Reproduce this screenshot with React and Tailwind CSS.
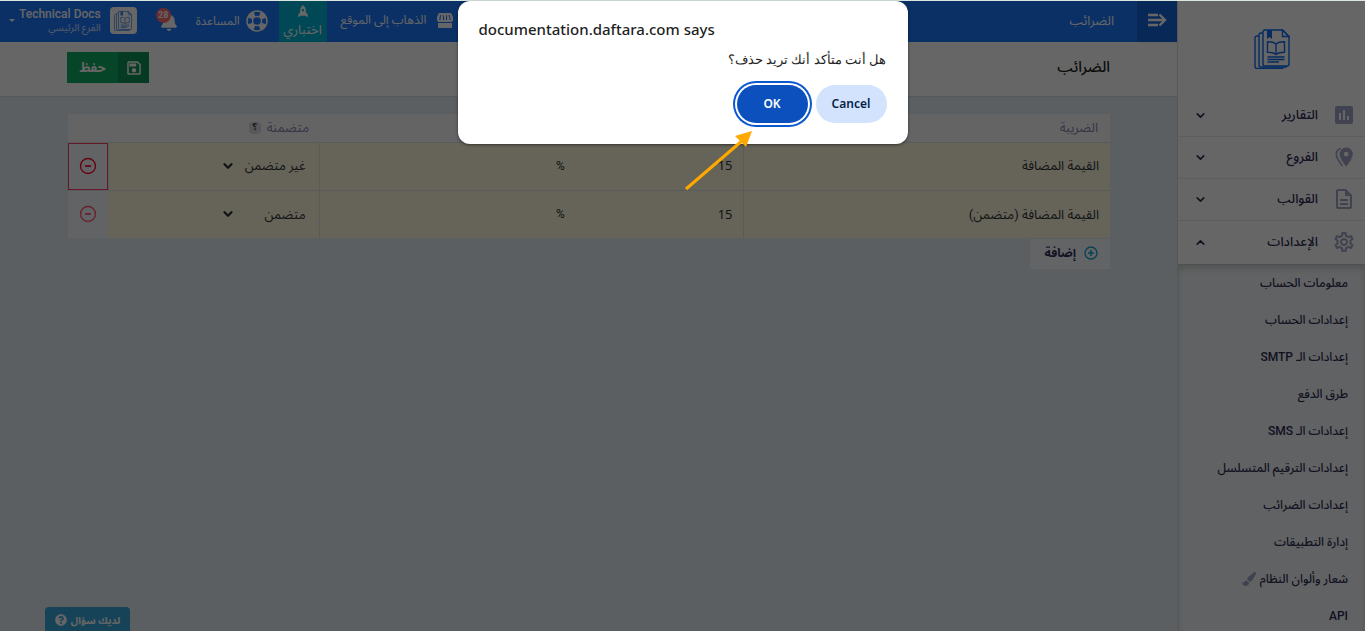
import { FaBell, FaQuestionCircle, FaPaintBrush } from 'react-icons/fa'
import {
  MdInsertChart,
  MdOutlineDescription,
  MdOutlineSave,
  MdOutlineSettings,
} from 'react-icons/md'
import { ChevronDown, ChevronUp } from 'lucide-react'

function BranchesIcon() {
  return (
    <svg width="24" height="24" viewBox="-2 -2 24 24" fill="currentColor" aria-hidden="true">
      <path
        fillRule="evenodd"
        d="M12.2 0.6a6.6 6.6 0 0 1 6.6 6.6c0 4.6-6.6 12.3-6.6 12.3S5.6 11.8 5.6 7.2A6.6 6.6 0 0 1 12.2 0.6zm0 4.2a2.4 2.4 0 1 0 0 4.8 2.4 2.4 0 0 0 0-4.8z"
      />
      <path
        d="M6.6 1.4C4 2.4 2.3 4.5 2.3 7.3c0 4.3 4.7 9.8 6.3 11.7"
        fill="none"
        stroke="currentColor"
        strokeWidth="1.6"
      />
    </svg>
  )
}

function MenuIcon() {
  return (
    <svg
      width="20"
      height="14"
      viewBox="0 0 20 14"
      fill="none"
      stroke="currentColor"
      strokeWidth="2.4"
      aria-hidden="true"
    >
      <path d="M1 2h10M1 7h17M1 12h10M12.5 1.5 18 7l-5.5 5.5" />
    </svg>
  )
}

function StoreIcon() {
  return (
    <svg width="16" height="15" viewBox="0 0 16 15" fill="currentColor" aria-hidden="true">
      <path
        fillRule="evenodd"
        d="M2 0h12l2 4v3a2 2 0 0 1-2 2H2a2 2 0 0 1-2-2V4zM3.5 2 2.5 4.5V7h1V4.5L4.5 2zm3 0-.5 2.5V7h1V2zM9 2v5h1V4.5L9.500 2zm2.500 0 1 2.500V7h1V4.500L12.500 2z"
      />
      <path d="M1 10h14v4a1 1 0 0 1-1 1H2a1 1 0 0 1-1-1z" />
    </svg>
  )
}

function RocketIcon() {
  return (
    <svg width="12" height="15" viewBox="0 0 12 15" fill="currentColor" aria-hidden="true">
      <path
        fillRule="evenodd"
        d="M6 0c2.200 1.600 3.300 3.800 3.300 6.300v2L11.500 11v3L8.500 12.500h-5L.5 14v-3l2.200-2.700v-2C2.700 3.800 3.800 1.600 6 0zm0 4.500a1.400 1.400 0 1 0 0 2.800 1.400 1.400 0 0 0 0-2.800z"
      />
    </svg>
  )
}

function LifebuoyIcon() {
  return (
    <svg width="22" height="22" viewBox="0 0 22 22" fill="none" stroke="currentColor" aria-hidden="true">
      <circle cx="11" cy="11" r="10" strokeWidth="1.5" />
      <circle cx="11" cy="11" r="4.5" strokeWidth="1.5" />
      <circle
        cx="11"
        cy="11"
        r="7.5"
        strokeWidth="5"
        strokeDasharray="6.28 5.5"
        strokeDashoffset="-2.7"
      />
    </svg>
  )
}

function DocsLogo({ className }) {
  return (
    <svg
      viewBox="0 0 36 40"
      className={className}
      fill="none"
      stroke="currentColor"
      strokeWidth="1.4"
      aria-hidden="true"
    >
      <path d="M10 1h18.500L35 7.500V35a2 2 0 0 1-2 2H11a2 2 0 0 1-2-2V3a2 2 0 0 1 2-2z" />
      <path d="M28.500 1v6.500H35z" />
      <path d="M9 4H7a2 2 0 0 0-2 2v30a2 2 0 0 0 2 2h24.500a1.500 1.500 0 0 0 1.500-1" />
      <path d="M5 7H3a2 2 0 0 0-2 2v28.500a2 2 0 0 0 2 2h25a1.500 1.500 0 0 0 1.500-1.500" />
      <path d="M13 1h5v9l-2.500-2L13 10z" fill="currentColor" stroke="none" />
      <path d="M22 15c-2-1.800-5-2.300-8.500-2.300v10.500c3.500 0 6.500.500 8.500 2.300 2-1.800 5-2.300 8.500-2.300V12.700c-3.500 0-6.500.500-8.500 2.300zv10.500" />
      <path d="M13.500 28h17M13.500 30.500h17M13.500 33h11.500" />
    </svg>
  )
}

function MinusCircle() {
  return (
    <svg width="18" height="18" viewBox="0 0 18 18" fill="none" stroke="currentColor" aria-hidden="true">
      <circle cx="9" cy="9" r="7.5" strokeWidth="1.4" />
      <path d="M6 9h6" strokeWidth="1.8" />
    </svg>
  )
}

function PlusCircle() {
  return (
    <svg width="14" height="14" viewBox="0 0 14 14" fill="none" stroke="currentColor" aria-hidden="true">
      <circle cx="7" cy="7" r="6" strokeWidth="1.4" />
      <path d="M4 7h6M7 4v6" strokeWidth="1.6" />
    </svg>
  )
}

const menu = [
  { label: 'التقارير', icon: MdInsertChart },
  { label: 'الفروع', icon: BranchesIcon },
  { label: 'القوالب', icon: MdOutlineDescription },
  { label: 'الإعدادات', icon: MdOutlineSettings, open: true },
]

const settings = [
  'معلومات الحساب',
  'إعدادات الحساب',
  'إعدادات الـ SMTP',
  'طرق الدفع',
  'إعدادات الـ SMS',
  'إعدادات الترقيم المتسلسل',
  'إعدادات الضرائب',
  'إدارة التطبيقات',
  'شعار وألوان النظام',
  'API',
]

const taxes = [
  { name: 'القيمة المضافة', rate: 15, included: 'غير متضمن', focused: true },
  { name: 'القيمة المضافة (متضمن)', rate: 15, included: 'متضمن' },
]

function Sidebar() {
  return (
    <aside className="flex w-[188px] shrink-0 flex-col border-l border-[#d8dde2] bg-white">
      <div className="flex h-[94px] shrink-0 items-center justify-center pt-[2px]">
        <DocsLogo className="h-10 w-9 text-[#0f6df0]" />
      </div>
      <nav className="flex flex-col text-[#2c2c54]">
        {menu.map(({ label, icon: Icon, open }) => (
          <button
            key={label}
            className={`flex shrink-0 items-center border-b pr-[9px] pb-px pl-4 text-[13px] font-medium ${
              open ? 'h-11 border-[#c4c8cc]' : 'h-[42px] border-[#ececec]'
            }`}
            aria-expanded={!!open}
          >
            <span className="text-[#a2a5c6]">
              <Icon size={24} />
            </span>
            <span className="grow pr-[14px] text-right">{label}</span>
            {open ? (
              <ChevronUp size={13} strokeWidth={3} />
            ) : (
              <ChevronDown size={13} strokeWidth={3} />
            )}
          </button>
        ))}
        <ul className="bg-[#f3f5f7] shadow-[inset_0_4px_6px_rgba(0,0,0,0.15)]">
          {settings.map((label) => (
            <li key={label}>
              <a
                href="#"
                className="flex h-[37px] items-center gap-1 pr-[17px] pb-[2px] text-xs font-medium"
              >
                {label}
                {label === 'شعار وألوان النظام' && (
                  <FaPaintBrush size={14} className="text-[#a2a5c6]" />
                )}
              </a>
            </li>
          ))}
        </ul>
      </nav>
    </aside>
  )
}

function TopBar() {
  return (
    <header className="flex h-[41px] shrink-0 items-center justify-between bg-[#1a78ff] text-white">
      <div className="flex h-full items-center">
        <button
          className="flex h-full w-10 items-center justify-center bg-[#1668dd] pb-[3px]"
          aria-label="القائمة"
        >
          <MenuIcon />
        </button>
        <span className="pr-[23px] pb-[2px] text-[13px]">الضرائب</span>
      </div>
      <div className="flex h-full items-center text-xs">
        <a href="#" className="flex items-center gap-[11px] pb-[3px]">
          <StoreIcon />
          الذهاب إلى الموقع
        </a>
        <button className="mr-[14px] flex h-full w-12 flex-col items-center bg-[#00b4d8] pt-1 text-[13px] leading-6">
          <RocketIcon />
          اختباري
        </button>
        <a href="#" className="mr-[11px] flex items-center gap-[6px] pb-[2px]">
          <LifebuoyIcon />
          المساعدة
        </a>
        <button
          className="relative mr-[18px] flex h-7 w-[22px] items-center"
          aria-label="التنبيهات"
        >
          <FaBell size={18} />
          <span className="absolute top-0 left-0 flex size-[15px] items-center justify-center rounded-full bg-[#ff6b6b] text-[9px] font-bold">
            28
          </span>
        </button>
        <button className="mr-[19px] flex items-center pb-[2px] pl-[9px]">
          <span className="flex size-[27px] items-center justify-center rounded bg-white">
            <DocsLogo className="h-5 w-[18px] text-[#3f86e8]" />
          </span>
          <span className="flex flex-col pr-[9px] text-right">
            <span className="leading-3 font-medium">Technical Docs</span>
            <span className="pt-[2px] text-[10px] leading-3 opacity-80">الفرع الرئيسي</span>
          </span>
          <span className="mr-1 border-x-3 border-t-3 border-x-transparent border-t-white" />
        </button>
      </div>
    </header>
  )
}

function TaxTable() {
  return (
    <table className="w-full table-fixed border-collapse text-[13px] text-[#2f3337]">
      <colgroup>
        <col className="w-[367px]" />
        <col />
        <col className="w-[211px]" />
        <col className="w-10" />
      </colgroup>
      <thead>
        <tr className="h-7 bg-[#fafbfd] text-[#8586a8]">
          <th className="px-3 text-right font-normal">الضريبة</th>
          <th aria-label="النسبة" />
          <th className="px-[10px] text-right font-normal">
            <span className="flex items-center gap-[6px]">
              متضمنة
              <button
                className="flex size-3 items-center justify-center rounded-sm bg-[#dcdcdc] text-[9px] font-bold text-[#444]"
                aria-label="مساعدة"
              >
                ؟
              </button>
            </span>
          </th>
          <th aria-label="حذف" />
        </tr>
      </thead>
      <tbody>
        {taxes.map((tax) => (
          <tr key={tax.name} className="h-12 border-t border-[#dfe2ea] bg-[#fffadf]">
            <td className="p-0">
              <input
                className="w-full bg-transparent px-[11px] outline-none"
                defaultValue={tax.name}
                aria-label="الضريبة"
              />
            </td>
            <td className="border-x border-[#e0e0da] p-0">
              <div className="flex items-center">
                <input
                  className="w-[42%] bg-transparent px-[10px] font-['Noto_Sans',sans-serif] outline-none"
                  defaultValue={tax.rate}
                  aria-label="النسبة"
                />
                <span className="text-xs">%</span>
              </div>
            </td>
            <td className="p-0">
              <div className="relative mr-[13px] w-[85px]">
                <select
                  className="w-full appearance-none bg-transparent outline-none"
                  defaultValue={tax.included}
                  aria-label="متضمنة"
                >
                  <option>غير متضمن</option>
                  <option>متضمن</option>
                </select>
                <ChevronDown
                  size={14}
                  strokeWidth={4}
                  className="pointer-events-none absolute top-1/2 left-0 -translate-y-1/2"
                />
              </div>
            </td>
            <td className="bg-[#f6f8fa] p-0">
              <button
                className={`flex h-[47px] w-full items-center justify-center ${
                  tax.focused
                    ? 'border border-[#ff3d63] text-[#ff0a35] ring-1 ring-[#cfe6ee]'
                    : 'text-[#ff5a74]'
                }`}
                aria-label="حذف"
              >
                <MinusCircle />
              </button>
            </td>
          </tr>
        ))}
      </tbody>
    </table>
  )
}

function ConfirmDialog() {
  return (
    <div
      role="dialog"
      aria-labelledby="dialog-title"
      dir="ltr"
      className="relative mx-auto h-[143px] w-[450px] rounded-xl bg-white px-[21px] pt-[18px] font-['Noto_Sans','Open_Sans',sans-serif] text-[#1f1f1f] shadow-[0_1px_3px_rgba(0,0,0,0.5)]"
    >
      <h2 id="dialog-title" className="text-[15px] leading-5 font-medium">
        documentation.daftara.com says
      </h2>
      <p dir="rtl" className="mt-2 text-[13px] leading-6">
        هل أنت متأكد أنك تريد حذف؟
      </p>
      <div className="mt-[14px] flex justify-end gap-2 text-xs font-semibold">
        <button className="h-[38px] w-[71px] rounded-full bg-[#0b50bd] text-white ring-2 ring-[#0b57d0] ring-offset-2">
          OK
        </button>
        <button className="h-[38px] w-[71px] rounded-full bg-[#d3e3fd] text-[#041e49]">Cancel</button>
      </div>
      {/* pointer to the OK button */}
      <svg
        className="absolute top-[130px] left-[227px]"
        width="68"
        height="60"
        viewBox="0 0 68 60"
        aria-hidden="true"
      >
        <path d="M1 58 58 9" stroke="#ffa800" strokeWidth="3" />
        <path d="M67 0 50 5l11 11z" fill="#ffa800" />
      </svg>
    </div>
  )
}

export default function App() {
  return (
    <div
      dir="rtl"
      className="relative flex h-screen overflow-hidden bg-[#e4eef6] pt-px font-[Roboto,'Noto_Sans_Arabic','DejaVu_Sans',sans-serif]"
    >
      <Sidebar />
      <main className="flex min-w-0 grow flex-col">
        <TopBar />
        <div className="flex h-[55px] shrink-0 items-center justify-between border-b border-[#d3dbe4] bg-white px-[67px] pb-[3px]">
          <h1 className="text-[15px] font-medium text-[#222]">الضرائب</h1>
          <button className="flex h-[31px] items-center bg-[#10ac64] text-[13px] font-bold text-white">
            <span className="flex h-full w-[31px] items-center justify-center bg-[#0d9455]">
              <MdOutlineSave size={18} />
            </span>
            <span className="w-[51px] text-center">حفظ</span>
          </button>
        </div>
        <div className="grow pt-[17px] pr-[67px] pl-[68px]">
          <TaxTable />
          <button className="mt-px flex h-[30px] w-20 items-center gap-2 bg-[#f8f9fc] px-3 pb-[2px] text-xs font-bold text-[#32325d]">
            <span className="text-[#18a4d8]">
              <PlusCircle />
            </span>
            إضافة
          </button>
        </div>
        <div className="flex justify-end pl-[45px]">
          <button className="flex h-6 w-[85px] items-center justify-center gap-1 rounded-t-sm bg-[#37a9dd] pt-[2px] text-[10px] font-bold text-white">
            لديك سؤال
            <FaQuestionCircle size={12} />
          </button>
        </div>
      </main>
      <div className="absolute inset-0 border-t border-[#dbe6e0] bg-black/60 bg-clip-padding">
        <ConfirmDialog />
      </div>
    </div>
  )
}
